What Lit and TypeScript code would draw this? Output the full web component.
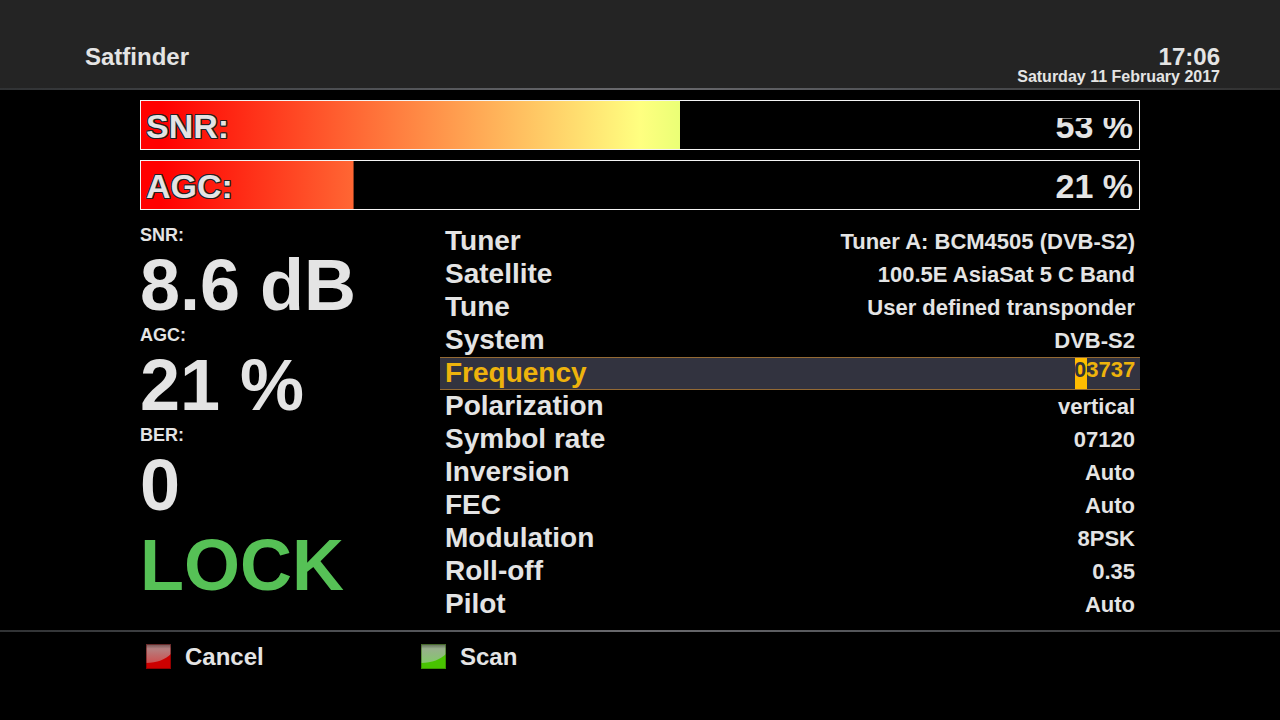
import { LitElement, html, css, svg } from "lit";
import { customElement, property, query } from "lit/decorators.js";
import { classMap } from "lit/directives/class-map.js";
import { styleMap } from "lit/directives/style-map.js";

interface Setting {
  name: string;
  value: string;
  editable?: boolean;
}

const SETTINGS: Setting[] = [
  { name: "Tuner", value: "Tuner A: BCM4505 (DVB-S2)" },
  { name: "Satellite", value: "100.5E AsiaSat 5 C Band" },
  { name: "Tune", value: "User defined transponder" },
  { name: "System", value: "DVB-S2" },
  { name: "Frequency", value: "03737", editable: true },
  { name: "Polarization", value: "vertical" },
  { name: "Symbol rate", value: "07120" },
  { name: "Inversion", value: "Auto" },
  { name: "FEC", value: "Auto" },
  { name: "Modulation", value: "8PSK" },
  { name: "Roll-off", value: "0.35" },
  { name: "Pilot", value: "Auto" },
];

@customElement("signal-bar")
class SignalBar extends LitElement {
  @property() label = "";
  @property({ type: Number }) percent = 0;
  @property({ type: Number }) level = 0;
  @property({ type: Boolean }) clipped = false;

  static styles = css`
    :host {
      display: block;
    }
    .bar {
      display: grid;
      box-sizing: border-box;
      height: 50px;
      border: 1px solid #f4f4f4;
      background: #000;
    }
    .fill,
    .texts {
      grid-area: 1 / 1;
    }
    .fill {
      background: linear-gradient(90deg, #ff0000 2%, #ffff80 50%, #00ff00);
    }
    .texts {
      z-index: 1;
      display: flex;
      justify-content: space-between;
      padding: 5px 6px 3px 5px;
      font-size: 34px;
      line-height: 40px;
    }
    .label {
      text-shadow: -1px -1px #222, 1px -1px #222, -1px 1px #222, 1px 1px #222,
        0 -1px #222, 0 1px #222, -1px 0 #222, 1px 0 #222;
    }
    .clipped {
      clip-path: inset(12px 0 0 0);
    }
  `;

  render() {
    const cut = `inset(0 ${100 - this.level}% 0 0)`;
    return html`
      <div
        class="bar"
        role="meter"
        aria-label=${this.label}
        aria-valuemin="0"
        aria-valuemax="100"
        aria-valuenow=${this.percent}
      >
        <div class="fill" style=${styleMap({ clipPath: cut })}></div>
        <div class="texts">
          <span class="label">${this.label}</span>
          <span class=${classMap({ value: true, clipped: this.clipped })}>${this.percent} %</span>
        </div>
      </div>
    `;
  }
}

@customElement("color-key")
class ColorKey extends LitElement {
  @property() label = "";
  @property() tone = "red";

  static styles = css`
    :host {
      display: block;
    }
    button {
      display: flex;
      align-items: center;
      gap: 14px;
      padding: 0;
      border: 0;
      background: none;
      color: inherit;
      font: inherit;
      line-height: 27px;
    }
    svg {
      display: block;
      width: 25px;
      height: 25px;
    }
  `;

  render() {
    const red = this.tone === "red";
    const base = red ? "#cc0000" : "#48c400";
    const edge = red ? "#5a0000" : "#2c6400";
    return html`
      <button type="button">
        <svg viewBox="0 0 25 25" aria-hidden="true">
          ${svg`
            <defs>
              <linearGradient id="gloss" x1="0" y1="0" x2="0" y2="1">
                <stop offset="0" stop-color=${red ? "#6e5050" : "#5c6a54"}></stop>
                <stop offset="0.25" stop-color=${red ? "#b48080" : "#98b08c"}></stop>
                <stop offset="1" stop-color=${red ? "#cc5050" : "#84c86c"}></stop>
              </linearGradient>
            </defs>
            <rect width="25" height="25" fill=${base}></rect>
            <path d="M0 0H25V10C20 15 11 19 0 19Z" fill="url(#gloss)"></path>
            <rect x="0.5" y="0.5" width="24" height="24" fill="none" stroke=${edge} stroke-opacity="0.5"></rect>
          `}
        </svg>
        <span>${this.label}</span>
      </button>
    `;
  }
}

@customElement("app-root")
class AppRoot extends LitElement {
  @query(".entry") entry!: HTMLInputElement;

  static styles = css`
    :host {
      display: flex;
      flex-direction: column;
      min-height: 100vh;
      background: #000;
      color: #e4e4e4;
      font-family: "Liberation Sans", Arial, sans-serif;
      font-weight: bold;
    }
    header {
      display: flex;
      justify-content: space-between;
      padding: 44px 60px 0 85px;
      height: 44px;
      background: #242424;
      font-size: 24px;
      line-height: 26px;
    }
    .rule {
      height: 2px;
      background: linear-gradient(90deg, #303234, #505256 30%, #6a6a6e 50%, #505256 70%, #303030);
    }
    h1 {
      margin: 0;
      font-size: 24px;
    }
    .clock {
      text-align: right;
    }
    .date {
      font-size: 16px;
      line-height: 13px;
    }
    main {
      flex: 1;
      padding: 10px 140px 9px;
    }
    .bars {
      display: grid;
      gap: 10px;
    }
    .body {
      display: grid;
      grid-template-columns: 300px 1fr;
      margin-top: 15px;
    }
    dl,
    dd {
      margin: 0;
    }
    .readings dt {
      font-size: 18px;
      line-height: 20px;
    }
    .readings dd {
      font-size: 72px;
      line-height: 80px;
    }
    .lock {
      color: #56c156;
      font-size: 72px;
      line-height: 80px;
    }
    .row {
      display: flex;
      justify-content: space-between;
      box-sizing: border-box;
      height: 33px;
      padding: 0 5px;
      border: solid transparent;
      border-width: 1px 0;
      font-size: 22px;
      line-height: 31px;
    }
    .name {
      font-size: 28px;
      line-height: 29px;
    }
    .row.active {
      background: #32333f;
      border-color: #946a34;
      color: #eeb30c;
    }
    .entry {
      box-sizing: border-box;
      width: 60px;
      height: 31px;
      padding: 0 0 7px;
      border: 0;
      outline: 0;
      background: linear-gradient(#ffbc00, #ffbc00) 0 0 / 12px 100% no-repeat;
      color: inherit;
      font: inherit;
      line-height: 24px;
    }
    .entry::selection {
      background: #ffbc00;
      color: #33343a;
    }
    footer {
      display: grid;
      grid-template-columns: 275px 1fr;
      padding: 11px 146px 50px;
      font-size: 24px;
    }
  `;

  firstUpdated() {
    this.entry.focus();
    this.entry.setSelectionRange(0, 1);
  }

  render() {
    return html`
      <header>
        <h1>Satfinder</h1>
        <div class="clock">
          <div>17:06</div>
          <div class="date">Saturday 11 February 2017</div>
        </div>
      </header>
      <div class="rule"></div>
      <main>
        <div class="bars">
          <signal-bar label="SNR:" percent="53" level="54" clipped></signal-bar>
          <signal-bar label="AGC:" percent="21" level="21.3"></signal-bar>
        </div>
        <div class="body">
          <div>
            <dl class="readings">
              <dt>SNR:</dt>
              <dd>8.6 dB</dd>
              <dt>AGC:</dt>
              <dd>21 %</dd>
              <dt>BER:</dt>
              <dd>0</dd>
            </dl>
            <div class="lock">LOCK</div>
          </div>
          <div class="settings">
            ${SETTINGS.map(
              (s) => html`
                <div class=${classMap({ row: true, active: !!s.editable })}>
                  ${s.editable
                    ? html`<label class="name" for="entry">${s.name}</label>
                        <input id="entry" class="entry" type="text" inputmode="numeric" maxlength="5" .value=${s.value} />`
                    : html`<span class="name">${s.name}</span><span>${s.value}</span>`}
                </div>
              `
            )}
          </div>
        </div>
      </main>
      <div class="rule"></div>
      <footer>
        <color-key label="Cancel" tone="red"></color-key>
        <color-key label="Scan" tone="green"></color-key>
      </footer>
    `;
  }
}
